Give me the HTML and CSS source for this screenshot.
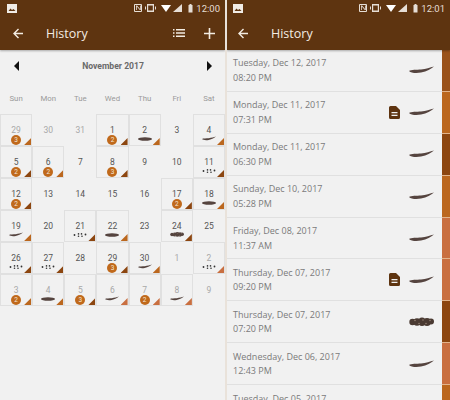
FILE: index.html
```html
<!DOCTYPE html>
<html lang="en">
<head>
  <meta charset="UTF-8">
  <title>History</title>
  <link rel="stylesheet" href="styles.css">
</head>
<body>
  <!-- shared icons -->
  <svg class="defs">
    <symbol id="curve" viewBox="0 0 25 8"><path d="M0 5C2 3.6 8 4 12 3.6C17 3 21 1.6 25 .6C22 3 18 5.6 12 6.6C7 7.5 2 7 0 5Z"/></symbol>
    <symbol id="flat" viewBox="0 0 14 4"><ellipse cx="7" cy="2" rx="7" ry="1.7"/></symbol>
    <symbol id="lump" viewBox="0 0 25 9"><circle cx="3.5" cy="4.5" r="3.2"/><circle cx="8" cy="4.5" r="3.8"/><circle cx="13" cy="4.3" r="4.2"/><circle cx="18" cy="4.5" r="3.9"/><circle cx="22" cy="4" r="3"/><g fill="#a08c7e"><circle cx="6" cy="3" r=".7"/><circle cx="10" cy="6" r=".7"/><circle cx="14" cy="2.5" r=".7"/><circle cx="17" cy="6" r=".7"/><circle cx="21" cy="3" r=".7"/></g></symbol>
    <symbol id="dots" viewBox="0 0 14 4"><g fill="#333"><circle cx="1.500" cy="2" r=".9"/><circle cx="5.500" cy=".9" r=".8"/><circle cx="5.500" cy="3.200" r=".8"/><circle cx="8.500" cy=".9" r=".8"/><circle cx="9" cy="3.200" r=".8"/><circle cx="12.500" cy="1.500" r=".9"/></g></symbol>
    <symbol id="doc" viewBox="0 0 11 13"><path fill="#5e3410" d="M1.500 0H7L11 4V11.500A1.500 1.500 0 0 1 9.500 13H1.500A1.500 1.500 0 0 1 0 11.500V1.500A1.500 1.500 0 0 1 1.500 0Z"/><path fill="#f1f1f1" d="M2.500 6H8.500V7.200H2.500ZM2.500 8.800H8.500V10H2.500Z"/></symbol>
    <symbol id="status" viewBox="0 0 60 10"><path fill="none" stroke="#e6ded6" d="M.5 1.500H7.500V8.500H.5Z"/><path fill="#e6ded6" d="M2 7V2.500H3L6 6V2.500H6.800V7H5.800L2.800 3.500V7Z"/><path fill="#e6ded6" d="M13 1H20V9H13ZM14.200 2.500V7.500H18.800V2.500ZM11 3.500H12V6.500H11ZM21 3.500H22V6.500H21Z"/><path fill="#fff" d="M27 2H37L32 9Z"/><path fill="#e6ded6" d="M48 1V9H39Z"/><path fill="#e6ded6" d="M54.500 2H55.500V1H57.500V2H58.500V9.500H54.500Z"/></symbol>
    <symbol id="photo" viewBox="0 0 10 9"><path fill="#f1ece6" d="M0 0H10V9H0Z"/><path fill="#5e3410" d="M1.500 7L3.500 4.500L5 6L6.500 5L8.500 7Z"/></symbol>
    <symbol id="back" viewBox="0 0 10 11"><path fill="none" stroke="#f3ece2" stroke-width="1.400" d="M10 5.500H1M5.500 1L1 5.500L5.500 10"/></symbol>
  </svg>

  <!-- Calendar -->
  <section class="phone calendar-phone">
    <header class="appbar">
      <div class="statusbar">
        <svg class="photo-icon"><use href="#photo"/></svg>
        <svg class="status-icons"><use href="#status"/></svg>
        <span class="clock">12:00</span>
      </div>
      <div class="toolbar">
        <svg class="back"><use href="#back"/></svg>
        <h1>History</h1>
        <svg class="tool list-icon" viewBox="0 0 12 8"><path fill="#f3ece2" d="M0 0H1.500V1.500H0ZM3 0H12V1.500H3ZM0 3.200H1.500V4.700H0ZM3 3.200H12V4.700H3ZM0 6.400H1.500V7.900H0ZM3 6.400H12V7.900H3Z"/></svg>
        <svg class="tool plus-icon" viewBox="0 0 11 11"><path fill="#f3ece2" d="M4.700 0H6.300V4.700H11V6.300H6.300V11H4.700V6.300H0V4.700H4.700Z"/></svg>
      </div>
    </header>
    <div class="month-nav">
      <span class="tri tri-left"></span>
      <span class="month">November 2017</span>
      <span class="tri tri-right"></span>
    </div>
    <div class="weekdays">
      <span>Sun</span><span>Mon</span><span>Tue</span><span>Wed</span><span>Thu</span><span>Fri</span><span>Sat</span>
    </div>
    <div class="grid">
      <div class="cell on muted">29<b class="badge">3</b><i class="cnr mid"></i></div>
      <div class="cell muted">30</div>
      <div class="cell muted">31</div>
      <div class="cell on">1<b class="badge">2</b><i class="cnr dark"></i></div>
      <div class="cell on">2<svg class="mk mk-flat"><use href="#flat"/></svg><i class="cnr mid"></i></div>
      <div class="cell">3</div>
      <div class="cell on">4<svg class="mk mk-curve"><use href="#curve"/></svg><i class="cnr mid"></i></div>

      <div class="cell on">5<b class="badge">2</b><i class="cnr dark"></i></div>
      <div class="cell on">6<b class="badge">2</b><i class="cnr mid"></i></div>
      <div class="cell">7</div>
      <div class="cell on">8<b class="badge">3</b><i class="cnr dark"></i></div>
      <div class="cell">9</div>
      <div class="cell">10</div>
      <div class="cell on">11<svg class="mk mk-dots"><use href="#dots"/></svg><i class="cnr dark"></i></div>

      <div class="cell on">12<b class="badge">2</b><i class="cnr dark"></i></div>
      <div class="cell">13</div>
      <div class="cell">14</div>
      <div class="cell">15</div>
      <div class="cell">16</div>
      <div class="cell on">17<b class="badge">2</b><i class="cnr dark"></i></div>
      <div class="cell on">18<svg class="mk mk-flat"><use href="#flat"/></svg><i class="cnr mid"></i></div>

      <div class="cell on">19<svg class="mk mk-curve"><use href="#curve"/></svg><i class="cnr mid"></i></div>
      <div class="cell">20</div>
      <div class="cell on">21<svg class="mk mk-dots"><use href="#dots"/></svg><i class="cnr dark"></i></div>
      <div class="cell on">22<svg class="mk mk-flat"><use href="#flat"/></svg><i class="cnr mid"></i></div>
      <div class="cell">23</div>
      <div class="cell on">24<svg class="mk mk-lump"><use href="#lump"/></svg><i class="cnr dark"></i></div>
      <div class="cell">25</div>

      <div class="cell on">26<svg class="mk mk-dots"><use href="#dots"/></svg><i class="cnr dark"></i></div>
      <div class="cell on">27<svg class="mk mk-dots"><use href="#dots"/></svg><i class="cnr dark"></i></div>
      <div class="cell">28</div>
      <div class="cell on">29<b class="badge">3</b><i class="cnr dark"></i></div>
      <div class="cell on">30<svg class="mk mk-curve"><use href="#curve"/></svg><i class="cnr mid"></i></div>
      <div class="cell muted">1</div>
      <div class="cell on muted">2<svg class="mk mk-dots"><use href="#dots"/></svg><i class="cnr light"></i></div>

      <div class="cell on muted">3<b class="badge">2</b><i class="cnr mid"></i></div>
      <div class="cell on muted">4<svg class="mk mk-flat"><use href="#flat"/></svg><i class="cnr mid"></i></div>
      <div class="cell on muted">5<b class="badge">3</b><i class="cnr dark"></i></div>
      <div class="cell on muted">6<svg class="mk mk-curve"><use href="#curve"/></svg><i class="cnr light"></i></div>
      <div class="cell on muted">7<b class="badge">2</b><i class="cnr light"></i></div>
      <div class="cell on muted">8<svg class="mk mk-curve"><use href="#curve"/></svg><i class="cnr light"></i></div>
      <div class="cell muted">9</div>
    </div>
  </section>

  <!-- List -->
  <section class="phone list-phone">
    <header class="appbar">
      <div class="statusbar">
        <svg class="photo-icon"><use href="#photo"/></svg>
        <svg class="status-icons"><use href="#status"/></svg>
        <span class="clock">12:01</span>
      </div>
      <div class="toolbar">
        <svg class="back"><use href="#back"/></svg>
        <h1>History</h1>
      </div>
    </header>
    <ul class="entries">
      <li class="entry">
        <div class="when"><div>Tuesday, Dec 12, 2017</div><div>08:20 PM</div></div>
        <svg class="shape"><use href="#curve"/></svg>
        <span class="strip strip-brown"></span>
      </li>
      <li class="entry">
        <div class="when"><div>Monday, Dec 11, 2017</div><div>07:31 PM</div></div>
        <svg class="note"><use href="#doc"/></svg>
        <svg class="shape"><use href="#curve"/></svg>
        <span class="strip mid"></span>
      </li>
      <li class="entry">
        <div class="when"><div>Monday, Dec 11, 2017</div><div>06:30 PM</div></div>
        <svg class="shape"><use href="#curve"/></svg>
        <span class="strip dark"></span>
      </li>
      <li class="entry">
        <div class="when"><div>Sunday, Dec 10, 2017</div><div>05:28 PM</div></div>
        <svg class="shape"><use href="#curve"/></svg>
        <span class="strip mid"></span>
      </li>
      <li class="entry">
        <div class="when"><div>Friday, Dec 08, 2017</div><div>11:37 AM</div></div>
        <svg class="shape"><use href="#curve"/></svg>
        <span class="strip light"></span>
      </li>
      <li class="entry">
        <div class="when"><div>Thursday, Dec 07, 2017</div><div>09:20 PM</div></div>
        <svg class="note"><use href="#doc"/></svg>
        <svg class="shape"><use href="#curve"/></svg>
        <span class="strip light"></span>
      </li>
      <li class="entry">
        <div class="when"><div>Thursday, Dec 07, 2017</div><div>07:20 PM</div></div>
        <svg class="shape shape-lump"><use href="#lump"/></svg>
        <span class="strip dark"></span>
      </li>
      <li class="entry">
        <div class="when"><div>Wednesday, Dec 06, 2017</div><div>12:43 PM</div></div>
        <svg class="shape"><use href="#curve"/></svg>
        <span class="strip light"></span>
      </li>
      <li class="entry">
        <div class="when"><div>Tuesday, Dec 05, 2017</div><div>&nbsp;</div></div>
        <span class="strip mid"></span>
      </li>
    </ul>
  </section>
</body>
</html>
```

FILE: styles.css
```css
:root {
  --brown: #5e3410;
  --paper: #f1f1f1;
  --line: #e0e0e0;
  --tone-dark: #8c4610;
  --tone-mid: #bb671e;
  --tone-light: #c96f40;
  --poop: #55443f;
}
html, body {
  height: 400px;
  overflow: hidden;
}
body {
  margin: 0;
  display: flex;
  gap: 2px;
  background: #e9e2da;
  font-family: 'Roboto', 'Liberation Sans', sans-serif;
}
.defs {
  display: none;
}
.phone {
  background: var(--paper);
  height: 400px;
  overflow: hidden;
}
.calendar-phone {
  width: 225px;
}
.list-phone {
  width: 223px;
}
/* Header */
.appbar {
  background: var(--brown);
  height: 50px;
  box-shadow: 0 1px 2px rgba(0,0,0,0.3);
  position: relative;
}
.statusbar {
  height: 16px;
  display: flex;
  align-items: center;
  padding: 0 5px 0 7px;
}
.list-phone .statusbar {
  padding-left: 6px;
}
.photo-icon {
  width: 10px;
  height: 9px;
}
.status-icons {
  width: 60px;
  height: 10px;
  margin-left: auto;
}
.clock {
  color: #e6ded6;
  font-size: 9.5px;
  margin-left: 2px;
}
.toolbar {
  height: 34px;
  display: flex;
  align-items: center;
  padding: 0 10px 0 13px;
}
.list-phone .toolbar {
  padding-left: 11px;
}
.back {
  width: 10px;
  height: 11px;
}
.toolbar h1 {
  margin: 0 0 0 23px;
  font-family: 'Open Sans', sans-serif;
  font-weight: 400;
  font-size: 12.5px;
  color: #f3ece2;
  flex: 1;
}
.tool {
  flex: none;
}
.list-icon {
  width: 12px;
  height: 8px;
}
.plus-icon {
  width: 11px;
  height: 11px;
  margin-left: 19px;
}
/* Calendar */
.month-nav {
  height: 32px;
  display: flex;
  align-items: center;
  justify-content: space-between;
  padding: 0 13px 0 14px;
}
.month {
  font-size: 8.6px;
  font-weight: 700;
  color: #6a6a6a;
}
.tri {
  border-top: 5px solid transparent;
  border-bottom: 5px solid transparent;
}
.tri-left {
  border-right: 5px solid #111;
}
.tri-right {
  border-left: 5px solid #111;
}
.weekdays {
  height: 32px;
  display: grid;
  grid-template-columns: repeat(7, 1fr);
  align-items: center;
  text-align: center;
  font-size: 7.8px;
  color: #9a9a9a;
}
.grid {
  display: grid;
  grid-template-columns: repeat(7, 1fr);
  grid-auto-rows: 32px;
}
.cell {
  position: relative;
  display: flex;
  align-items: center;
  justify-content: center;
  font-size: 8.5px;
  color: #555;
  box-sizing: border-box;
}
.cell.on {
  border: 1px solid var(--line);
}
.cell.muted {
  color: #a8a8a8;
}
.badge {
  position: absolute;
  left: 50%;
  top: 20px;
  width: 10px;
  height: 10px;
  margin-left: -5px;
  border-radius: 50%;
  background: #c0691b;
  color: #f5e6d8;
  font-size: 6.5px;
  font-weight: 400;
  line-height: 10px;
  text-align: center;
}
.cnr {
  position: absolute;
  right: 0;
  bottom: 0;
  width: 7px;
  height: 7px;
  clip-path: polygon(100% 0, 100% 100%, 0 100%);
}
.dark {
  background: var(--tone-dark);
}
.mid {
  background: var(--tone-mid);
}
.light {
  background: var(--tone-light);
}
.mk {
  position: absolute;
  left: 50%;
  margin-left: -7px;
  fill: var(--poop);
}
.mk-curve {
  width: 14px;
  height: 5px;
  top: 21px;
}
.mk-flat {
  width: 14px;
  height: 4px;
  top: 22px;
}
.mk-lump {
  width: 14px;
  height: 5px;
  top: 21px;
}
.mk-dots {
  width: 14px;
  height: 4px;
  top: 22px;
}
/* History list */
.entries {
  list-style: none;
  margin: 0;
  padding: 0;
}
.entry {
  height: 41.9px;
  box-sizing: border-box;
  display: flex;
  align-items: center;
  padding-left: 6px;
  border-bottom: 1px solid var(--line);
}
.when {
  flex: 1;
  padding-top: 1px;
  font-family: 'Open Sans', sans-serif;
  font-size: 9px;
  line-height: 14.5px;
  color: #7a7a7a;
}
.note {
  width: 11px;
  height: 13px;
  margin-right: 9px;
}
.shape {
  width: 25px;
  height: 8px;
  margin-right: 8px;
  fill: var(--poop);
}
.shape-lump {
  height: 10px;
  fill: #4a3a32;
}
.strip {
  width: 8px;
  align-self: stretch;
  margin-bottom: -1px;
  border-bottom: 1px solid #e2b48c;
}
.strip-brown {
  background: #99521a;
}
```
